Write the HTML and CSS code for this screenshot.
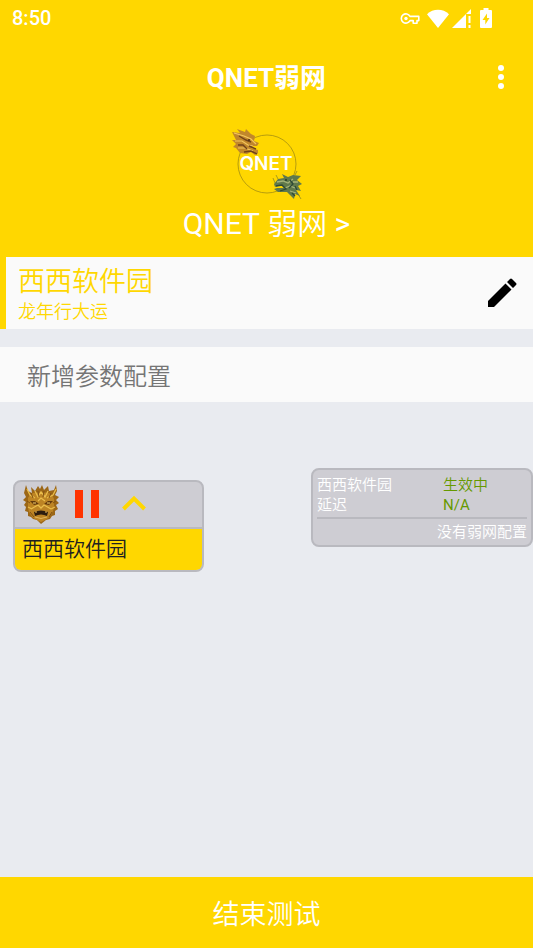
FILE: index.html
```html
<!DOCTYPE html>
<html lang="zh-CN">
<head>
    <meta charset="UTF-8">
    <meta name="viewport" content="width=device-width, initial-scale=1.0">
    <title>QNET弱网</title>
    <link rel="stylesheet" href="styles.css">
</head>
<body>
    <header class="header">
        <div class="status">
            <time datetime="20:50">8:50</time>
            <div class="status-icons">
                <!-- vpn key -->
                <svg width="20" height="13" viewBox="0 0 20 13">
                    <path d="M10 4.4H18.8V8.6H17V11.2H13.2V8.6H10A4.6 4.6 0 1 1 10 4.4Z" fill="none" stroke="#fff" stroke-width="1.6" stroke-linejoin="round"/>
                    <circle cx="6" cy="6.5" r="1.7" fill="#fff"/>
                </svg>
                <!-- wifi -->
                <svg width="24" height="19" viewBox="0 0 24 19">
                    <path d="M12 19L1 5.2C4 2.2 8 .8 12 .8S20 2.2 23 5.2Z" fill="#fff"/>
                </svg>
                <!-- signal -->
                <svg width="20" height="19" viewBox="0 0 20 19">
                    <path d="M0 19L19 0V5H14V19ZM16.5 7H18.5V14H16.5ZM16.5 16H18.5V19H16.5Z" fill="#fff"/>
                </svg>
                <!-- battery -->
                <svg class="battery" width="12" height="20" viewBox="0 0 12 20">
                    <path d="M3.5 0H8.5V2H11Q12 2 12 3V19Q12 20 11 20H1Q0 20 0 19V3Q0 2 1 2H3.5Z" fill="#fff"/>
                    <path d="M7 5.5L2.5 12H5.3V16.5L9.5 10H7Z" fill="#ffd700"/>
                </svg>
            </div>
        </div>
        <div class="toolbar">
            <h1>QNET弱网</h1>
            <button type="button" class="more" aria-label="更多">
                <svg width="8" height="26" viewBox="0 0 8 26" fill="#fff">
                    <circle cx="4" cy="4" r="3"/>
                    <circle cx="4" cy="13" r="3"/>
                    <circle cx="4" cy="22" r="3"/>
                </svg>
            </button>
        </div>
        <a href="#" class="brand">
            <svg width="72" height="72" viewBox="0 0 72 72">
                <circle cx="36" cy="36" r="29" fill="none" stroke="#a58e12" stroke-width=".8"/>
                <text x="35" y="42" class="logo-text">QNET</text>
                <!-- gold dragon -->
                <path d="M1 4L9 5 6 1 14 4 15 1 20 6 24 8 23 13 28 15 26 18 22 18 20 20 27 22 27 25 24 27 20 24 16 26 9 25 5 20 2 19 5 16 1 12 5 12Z" fill="#c1872b"/>
                <path d="M3 5L13 8 20 11 25 16M4 13L11 13 17 17 22 18M7 20L14 20 22 23" fill="none" stroke="#f4c760" stroke-width="1.2"/>
                <path d="M8 8L15 12 20 14M7 17L12 17 16 21M13 24L20 23 26 26M18 18L25 21" fill="none" stroke="#70421b" stroke-width="1.4"/>
                <circle cx="18" cy="12" r="1" fill="#4b2b12"/>
                <!-- green dragon -->
                <path d="M43 56L47 51 53 50 51 46 57 49 62 47 70 48 66 52 71 56 67 58 70 63 65 62 69 68 64 66 63 71 59 67 56 64 47 64 43 61 46 60 53 60 50 57 44 59Z" fill="#60794b"/>
                <path d="M46 54L52 53 57 55 62 51M54 60L59 58 64 60M59 63L65 65M62 54L67 54" fill="none" stroke="#a6b37a" stroke-width="1.3"/>
                <path d="M45 58L51 57 55 61 49 63M59 52L62 56 58 60M64 58L66 62M61 65L64 68" fill="none" stroke="#2e4938" stroke-width="1.3"/>
                <circle cx="55" cy="52" r="1" fill="#243b2e"/>
                <path d="M44 55L42 50M47 51L45 47M64 47L66 43M67 66L70 71" stroke="#858223" stroke-width=".7"/>
            </svg>
            <span class="brand-name"><span class="latin">QNET</span> 弱网 <span class="latin">&gt;</span></span>
        </a>
    </header>

    <main class="main">
        <section class="profile">
            <div>
                <h2>西西软件园</h2>
                <p>龙年行大运</p>
            </div>
            <button type="button" class="edit" aria-label="编辑">
                <svg width="30" height="30" viewBox="0 0 30 30">
                    <path d="M1 23L18.5 5.5 24.5 11.5 7 29H1ZM20 4L23 1Q24 0 25 1L29 5Q30 6 29 7L26 10Z"/>
                </svg>
            </button>
        </section>

        <button type="button" class="add">新增参数配置</button>

        <div class="floats">
            <section class="panel control">
                <div class="control-bar">
                    <svg width="40" height="42" viewBox="0 0 40 42">
                        <!-- mane -->
                        <path d="M5 2L7 8 11 10 10 4 14 8 17 3 19 6 21 2 23 7 27 3 28 8 33 7 35 2 36 8 34 12 38 14 35 17 38 20 35 22 37 26 34 28 34 32 31 33 29 36 25 37 20 41 16 37 12 36 10 34 7 33 7 29 4 28 5 24 3 22 5 19 2 17 5 14 3 10Z" fill="#9c6717"/>
                        <path d="M7 15Q10 8 20 10Q31 8 33 16V24Q32 32 26 36L20 39 14 36Q8 32 7 25Z" fill="#bd8424"/>
                        <path d="M6 6L9 12 14 15M35 6L32 12 26 15M14 8L17 14 20 9 24 14 27 8M7 24L11 26M34 24L30 26M17 18L20 15 24 18M10 26L17 22 20 25 23 22 30 26" fill="none" stroke="#eabd4c" stroke-width="1.3"/>
                        <!-- eyes -->
                        <path d="M9 18L14 18 18 21 13 22ZM32 18L27 18 23 21 28 22Z" fill="#62390d"/>
                        <path d="M12 20H15M29 20H26" stroke="#f4d070"/>
                        <!-- mouth -->
                        <path d="M13 29Q20 26 27 29L26 33Q20 30 14 33Z" fill="#2d1c0e"/>
                        <path d="M14 34Q20 37 26 34M15 28V30M25 28V30" fill="none" stroke="#e2b65a"/>
                        <path d="M10 10L12 15M30 10L28 15M17 8L18 14M23 8L22 14M9 29L13 34M31 29L28 34M6 18L9 20M35 18L32 20" stroke="#805013"/>
                    </svg>
                    <button type="button" aria-label="暂停">
                        <svg width="24" height="28" viewBox="0 0 24 28">
                            <path d="M0 0H8V28H0ZM16 0H24V28H16Z" fill="#ff3300"/>
                        </svg>
                    </button>
                    <button type="button" aria-label="收起">
                        <svg width="24" height="18" viewBox="0 0 24 18">
                            <path d="M1.5 14L12 3.5 22.5 14" fill="none" stroke="#ffd700" stroke-width="4"/>
                        </svg>
                    </button>
                </div>
                <p class="control-name">西西软件园</p>
            </section>

            <section class="panel info">
                <dl>
                    <dt>西西软件园</dt>
                    <dd>生效中</dd>
                    <dt>延迟</dt>
                    <dd class="latin">N/A</dd>
                </dl>
                <p>没有弱网配置</p>
            </section>
        </div>
    </main>

    <button type="button" class="stop">结束测试</button>
</body>
</html>
```
FILE: styles.css
```css
* {
    box-sizing: border-box;
}

body {
    display: flex;
    flex-direction: column;
    min-height: 100vh;
    margin: 0;
    background-color: #e9ebf0;
    font-family: Roboto, "Noto Sans CJK SC", sans-serif;
    font-weight: 350;
    color: #212121;
}

h1,
h2,
p,
dl,
dd {
    margin: 0;
    font-weight: inherit;
}

button {
    padding: 0;
    border: 0;
    background: none;
    font: inherit;
    color: inherit;
}

svg {
    display: block;
}

.latin {
    font-weight: 400;
}

.header {
    background-color: #ffd700;
    color: #fff;
}

.status {
    display: flex;
    justify-content: space-between;
    align-items: center;
    height: 36px;
    padding: 0 41px 0 12px;
    font-size: 20px;
    font-weight: 500;
}

.status-icons {
    display: flex;
    align-items: center;
    gap: 6px;
}

.status-icons svg + svg + svg {
    margin-left: -4px;
}

.status-icons .battery.battery {
    margin-left: 2px;
}

.toolbar {
    display: grid;
    grid-template-columns: 1fr auto 1fr;
    align-items: center;
    height: 84px;
}

.toolbar h1 {
    grid-column: 2;
    padding-bottom: 6px;
    font-size: 26px;
    font-weight: bold;
}

.more {
    justify-self: end;
    padding: 8px 28px 10px;
}

.brand {
    display: flex;
    flex-direction: column;
    align-items: center;
    padding: 8px 0 10px;
    color: inherit;
    text-decoration: none;
}

.logo-text {
    fill: #fff;
    font-family: Inter, sans-serif;
    font-size: 19px;
    font-weight: 600;
    text-anchor: middle;
}

.brand-name {
    font-size: 30px;
    line-height: 47px;
}

.main {
    flex: 1;
}

.profile {
    display: flex;
    justify-content: space-between;
    align-items: center;
    height: 72px;
    padding: 0 16px 0 12px;
    border-left: 6px solid #ffd700;
    background-color: #fafafa;
    color: #ffd700;
}

.profile h2 {
    padding-top: 2px;
    font-size: 27px;
    line-height: 36px;
}

.profile p {
    font-size: 18px;
    line-height: 24px;
}

.edit {
    color: #000;
}

.add {
    display: block;
    width: 100%;
    height: 55px;
    margin-top: 18px;
    padding: 0 27px;
    background-color: #fafafa;
    font-size: 24px;
    text-align: left;
    color: #757575;
}

.floats {
    display: flex;
    justify-content: space-between;
    align-items: flex-start;
    padding: 66px 0 24px 13px;
}

.panel {
    border: 2px solid #b9b9bf;
    border-radius: 8px;
    background-color: #cecdd3;
}

.control {
    width: 191px;
    margin-top: 12px;
    overflow: hidden;
}

.control-bar {
    display: flex;
    align-items: center;
    height: 47px;
    padding: 0 6px 2px;
    border-bottom: 2px solid #b9b9bf;
}

.control-bar button {
    margin-left: 14px;
}

.control-bar button + button {
    margin-left: 23px;
}

.control-name {
    padding: 0 7px;
    background-color: #ffd700;
    font-size: 21px;
    line-height: 41px;
}

.info {
    width: 222px;
    padding: 5px 4px 0;
    font-size: 15px;
    line-height: 20px;
    color: #fff;
}

.info dl {
    display: grid;
    grid-template-columns: 126px 1fr;
    padding-bottom: 2px;
    border-bottom: 2px solid #b9b9bf;
}

.info dd {
    color: #669900;
}

.info p {
    padding: 3px 0;
    text-align: right;
}

.stop {
    height: 71px;
    background-color: #ffd700;
    font-size: 27px;
    color: #fff;
}
```
